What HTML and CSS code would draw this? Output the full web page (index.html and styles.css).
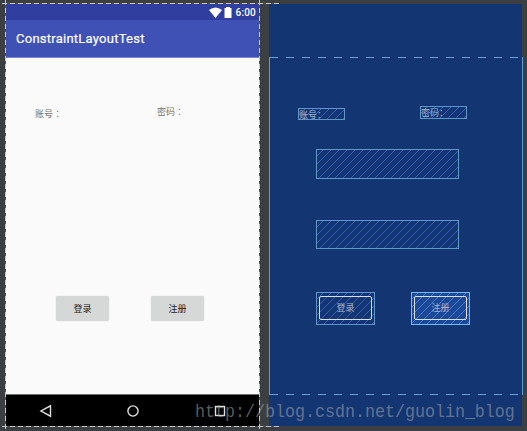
FILE: index.html
```html
<!DOCTYPE html>
<html lang="zh-CN">
<head>
<meta charset="utf-8">
<title>ConstraintLayoutTest</title>
<link rel="stylesheet" href="styles.css">
</head>
<body>
<main class="editor">
  <section class="phone">
    <header class="status">
      <svg class="wifi" viewBox="0 0 13 11"><path d="M0 3Q6.5-2.2 13 3L6.5 11Z"/></svg>
      <svg class="battery" viewBox="0 0 8 11"><path d="M2 0H6V1H7.5V11H.5V1H2Z"/></svg>
      <span>6:00</span>
    </header>
    <div class="appbar">ConstraintLayoutTest</div>
    <div class="content">
      <span class="label account" lang="zh-TW">账号：</span>
      <span class="label password" lang="zh-TW">密码：</span>
      <button class="button login">登录</button>
      <button class="button register">注册</button>
    </div>
    <nav class="nav">
      <svg viewBox="0 0 14 14"><path d="M11.5 1.8V12.2L2 7Z"/></svg>
      <svg viewBox="0 0 14 14"><circle cx="7" cy="7" r="5.1"/></svg>
      <svg viewBox="0 0 14 14"><rect x="2.5" y="2.5" width="9" height="9"/></svg>
    </nav>
  </section>
  <section class="blueprint">
    <div class="bounds">
      <span class="node account">账号：</span>
      <span class="node password">密码：</span>
      <span class="node field first"></span>
      <span class="node field second"></span>
      <span class="node action login"><span>登录</span></span>
      <span class="node action register"><span>注册</span></span>
    </div>
  </section>
  <i class="guide across top"></i>
  <i class="guide across bottom"></i>
  <i class="guide down left"></i>
  <i class="guide down right"></i>
  <div class="watermark">http://blog.csdn.net/guolin_blog</div>
</main>
</body>
</html>
```
FILE: styles.css
```css
* { box-sizing: border-box; }
body { margin: 0; font-family: Roboto, "Noto Sans CJK SC", sans-serif; }
.editor {
  position: relative;
  display: flex;
  gap: 10px;
  width: 527px;
  height: 431px;
  padding: 4px 4px 5px 6px;
  background: #3c3f41;
  overflow: hidden;
}
.phone { display: flex; flex-direction: column; flex: none; width: 253px; height: 422px; background: #fafafa; }
.status {
  display: flex;
  justify-content: flex-end;
  align-items: center;
  gap: 2px;
  height: 16px;
  padding: 1px 3px 0 0;
  background: #303f9f;
  color: #fff;
  font-size: 10px;
  font-weight: 500;
  letter-spacing: .2px;
  line-height: 12px;
}
.status svg { fill: #fff; height: 11px; }
.status span { margin-left: 2px; padding-top: 1px; }
.wifi { width: 13px; }
.battery { width: 8px; }
.appbar {
  height: 38px;
  padding-left: 10px;
  background: #3f51b5;
  border-bottom: 1px solid #7c88cc;
  color: #fff;
  font-size: 13px;
  font-weight: 400;
  -webkit-text-stroke: .2px #fff;
  letter-spacing: .25px;
  line-height: 38px;
}
.content { position: relative; height: 337px; border-bottom: 1px solid #6b706b; }
.label, .button, .node { position: absolute; white-space: nowrap; font-size: 9px; }
.label { color: #757575; font-family: "Noto Sans CJK TC", sans-serif; line-height: 12px; }
.label.account { left: 29px; top: 50px; }
.label.password { left: 151px; top: 48px; }
.button {
  top: 238px;
  width: 53px;
  height: 25px;
  padding: 0;
  border: 0;
  border-radius: 2px;
  background: #d6d7d7;
  box-shadow: 0 0 1px #c4c4c4;
  color: #222;
  font-family: inherit;
  line-height: 24px;
}
.button.login { left: 50px; }
.button.register { left: 145px; }
.nav {
  display: flex;
  align-items: center;
  gap: 73px;
  height: 31px;
  padding-left: 32.5px;
  background: #000;
}
.nav svg { width: 14px; height: 14px; fill: none; stroke: #e0e0e0; stroke-width: 1.4; }
.blueprint { flex: none; width: 254px; height: 422px; padding-top: 53px; background: linear-gradient(#133572, #133572) 0 0 / 253px 100% no-repeat; }
.bounds {
  position: relative;
  height: 338px;
  border: solid #5f9fd0;
  border-width: 0 1px;
  background:
    repeating-linear-gradient(90deg, #6aa1d6 0 8px, transparent 8px 16px) 0 0 / 100% 1px no-repeat,
    repeating-linear-gradient(90deg, #6aa1d6 0 8px, transparent 8px 16px) 0 100% / 100% 1px no-repeat;
}
.node {
  border: 1px solid #5c97c6;
  background: repeating-linear-gradient(135deg, #2c60c2 0 .36px, transparent .36px 5.3px, #2c60c2 5.3px 5.657px) border-box;
  color: #a9b4c9;
  line-height: 12px;
}
.node.account { left: 28px; top: 51px; width: 47px; height: 12px; }
.node.password { left: 150px; top: 49px; width: 47px; height: 13px; }
.field { left: 46px; width: 143px; }
.field.first { top: 92px; height: 30px; }
.field.second { top: 163px; height: 29px; }
.action { top: 235px; width: 59px; height: 33px; padding: 3px 2px; }
.action.login { left: 46px; }
.action.register { left: 141px; border-color: #78b8ef; background-color: #1d4893; background-image: repeating-linear-gradient(135deg, #3c7cec 0 .36px, transparent .36px 5.3px, #3c7cec 5.3px 5.657px); }
.action span {
  display: block;
  width: 53px;
  height: 24px;
  border: 1px solid #dedede;
  border-radius: 2px;
  line-height: 22px;
  text-align: center;
}
.guide { position: absolute; }
.across { left: 2px; width: 277px; height: 1px; background: repeating-linear-gradient(90deg, #c8c8c8 0 5px, #555 5px 8px); }
.down { top: 0; width: 1px; height: 429px; background: repeating-linear-gradient(#c8c8c8 0 5px, #555 5px 8px); }
.top { top: 3px; }
.bottom { top: 426px; }
.left { left: 5px; }
.right { left: 259px; }
.watermark {
  position: absolute;
  left: 195px;
  top: 402px;
  color: rgba(170, 170, 170, .55);
  font: 16.66px/20px "Liberation Mono", monospace;
  transform: scaleY(1.15);
}
```
